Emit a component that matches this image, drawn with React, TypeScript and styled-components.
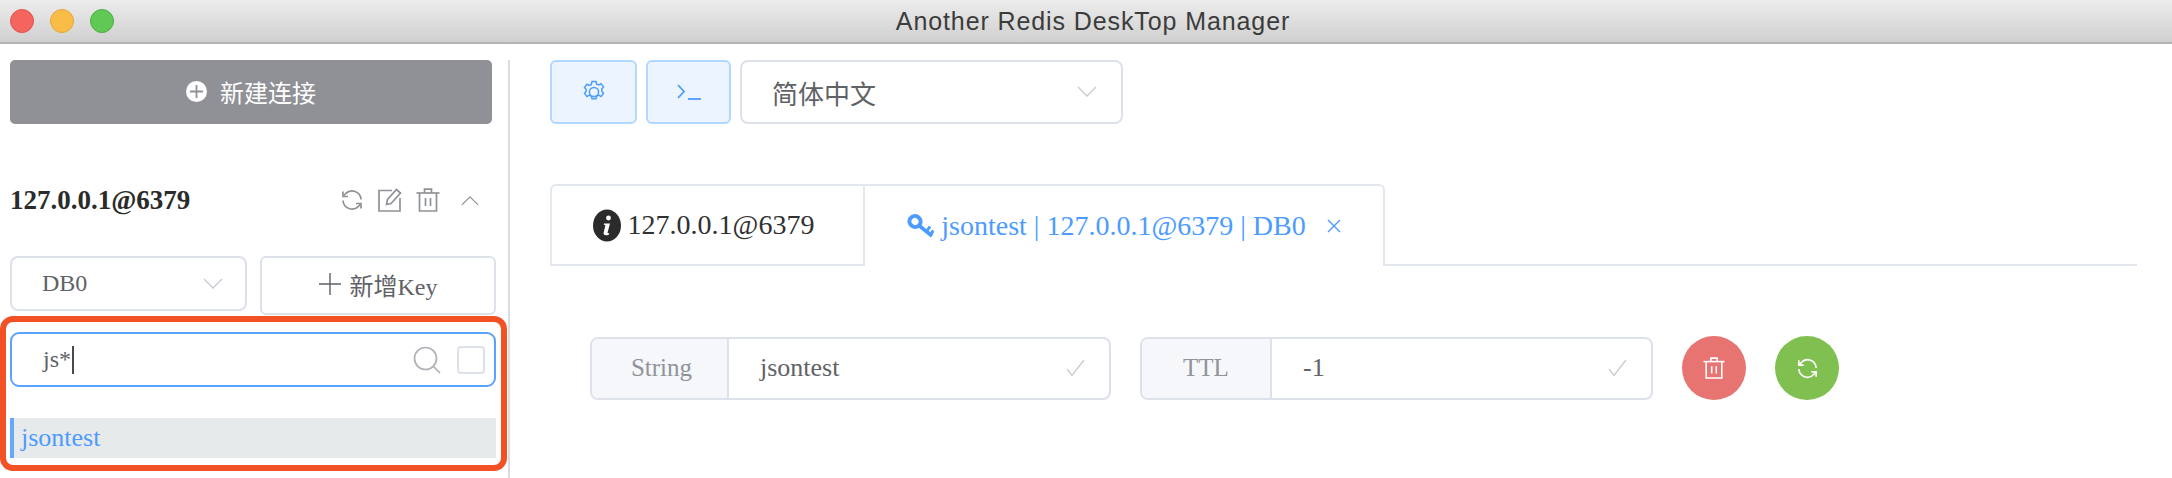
import styled, { createGlobalStyle } from "styled-components";

const SERIF = `"Liberation Serif", "Noto Sans CJK SC", serif`;

const GlobalStyle = createGlobalStyle`
  html, body {
    margin: 0;
    padding: 0;
    background: #fff;
    overflow: hidden;
  }
  * {
    box-sizing: border-box;
  }
`;

const RefreshIcon = ({ size = 24 }: { size?: number }) => (
  <svg width={size} height={size} viewBox="0 0 24 24" fill="none" stroke="currentColor" strokeWidth="1.7">
    <path d="M21 11.5a9 9 0 0 0-15.5-5.8L3.5 8" />
    <path d="M3 12.5a9 9 0 0 0 15.5 5.8L20.5 16" />
    <path d="M3 3.5V8.5H8" />
    <path d="M21 20.5V15.5H16" />
  </svg>
);

const TrashIcon = ({ size = 24 }: { size?: number }) => (
  <svg width={size} height={size} viewBox="0 0 24 24" fill="none" stroke="currentColor" strokeWidth="1.7">
    <path d="M0.5 5H23.5" />
    <path d="M8.5 5V1.2H15.5V5" />
    <path d="M3.5 5V23H20.5V5" />
    <path d="M9.5 10V18M14.5 10V18" />
  </svg>
);

const EditIcon = () => (
  <svg width="24" height="24" viewBox="0 0 24 24" fill="none" stroke="currentColor" strokeWidth="1.7">
    <path d="M14 2.5H1V23H22V10" />
    <path d="M8.5 16.5L9.5 11.5L18.5 1.5L22.5 5L13 15.5Z" />
  </svg>
);

const Chevron = ({ up, size = 20 }: { up?: boolean; size?: number }) => (
  <svg width={size} height={size * 0.6} viewBox="0 0 20 12" fill="none" stroke="currentColor" strokeWidth="1.3">
    <path d={up ? "M1 11L10 2L19 11" : "M1 1L10 10L19 1"} />
  </svg>
);

const CheckIcon = () => (
  <svg width="19" height="18" viewBox="0 0 19 18" fill="none" stroke="currentColor" strokeWidth="1.3">
    <path d="M1 10L6 16.5L18 1" />
  </svg>
);

const KeyIcon = () => (
  <svg width="27" height="24" viewBox="0 0 27 24" fill="none" stroke="currentColor">
    <ellipse cx="8" cy="7.5" rx="5.6" ry="5.4" strokeWidth="4" transform="rotate(35 8 7.5)" />
    <path d="M12 11.5L25 22" strokeWidth="3.6" />
    <path d="M19.5 17.5L23 12.5M23.5 20.5L26.5 16.5" strokeWidth="3" />
  </svg>
);

const Page = styled.div`
  width: 2172px;
  height: 478px;
  display: flex;
  flex-direction: column;
  font-family: ${SERIF};
  background: #fff;
  overflow: hidden;
`;

const TitleBar = styled.header`
  height: 44px;
  flex: none;
  display: flex;
  align-items: center;
  position: relative;
  padding-left: 10px;
  gap: 16px;
  background: linear-gradient(#ececec, #d0d0d0);
  border-bottom: 2px solid #b3b3b3;
`;

const Light = styled.span<{ $fill: string; $edge: string }>`
  width: 24px;
  height: 24px;
  border-radius: 50%;
  background: ${(p) => p.$fill};
  border: 1px solid ${(p) => p.$edge};
`;

const WindowTitle = styled.div`
  flex: 1;
  text-align: center;
  margin-left: -116px;
  font-family: "Liberation Sans", sans-serif;
  font-size: 25px;
  letter-spacing: 0.9px;
  color: #3c3c3c;
`;

const Body = styled.div`
  flex: 1;
  display: flex;
  padding-top: 16px;
  min-height: 0;
`;

const Sidebar = styled.aside`
  width: 510px;
  flex: none;
  padding: 0 12px 0 10px;
  border-right: 2px solid #dcdcdc;
`;

const ConnectButton = styled.button`
  width: 482px;
  height: 64px;
  display: flex;
  align-items: center;
  justify-content: center;
  gap: 13px;
  padding: 0 0 2px;
  border: none;
  border-radius: 5px;
  background: #8f9196;
  color: #fff;
  font-family: ${SERIF};
  font-size: 24px;
`;

const PlusDisc = styled.span`
  width: 21px;
  height: 21px;
  border-radius: 50%;
  background: #fff;
  color: #8f9196;
  display: flex;
  align-items: center;
  justify-content: center;
`;

const ServerRow = styled.div`
  margin-top: 52px;
  height: 48px;
  display: flex;
  align-items: center;
  justify-content: space-between;
  padding-right: 14px;
`;

const ServerName = styled.strong`
  font-size: 27px;
  color: #2b2b2b;
`;

const ServerTools = styled.div`
  display: flex;
  align-items: center;
  gap: 14px;
  color: #8f9297;
`;

const ToolSlot = styled.span`
  width: 24px;
  height: 24px;
  display: flex;
  align-items: center;
  justify-content: center;

  &:last-child {
    margin-left: 4px;
  }
`;

const FilterRow = styled.div`
  margin-top: 32px;
  display: flex;
  align-items: flex-start;
  gap: 13px;
`;

const Select = styled.div<{ $width: number; $height: number; $size: number; $pad: number }>`
  width: ${(p) => p.$width}px;
  height: ${(p) => p.$height}px;
  display: flex;
  align-items: center;
  justify-content: space-between;
  padding: 0 ${(p) => p.$pad}px 0 30px;
  border: 2px solid #dde1ea;
  border-radius: 8px;
  background: #fff;
  color: #606266;
  font-size: ${(p) => p.$size}px;
  flex: none;

  svg {
    color: #c6cad1;
  }
`;

const AddKeyButton = styled.button`
  width: 236px;
  height: 59px;
  display: flex;
  align-items: center;
  justify-content: center;
  gap: 9px;
  padding: 0 0 3px;
  border: 2px solid #dde1ea;
  border-radius: 6px;
  background: #fff;
  color: #606266;
  font-family: ${SERIF};
  font-size: 24px;
`;

const SearchSection = styled.section`
  position: relative;
  padding-top: 17px;
`;

const Annotation = styled.div`
  position: absolute;
  left: -10px;
  right: -11px;
  top: 1px;
  height: 155px;
  border: 6px solid #f25125;
  border-radius: 13px;
  pointer-events: none;
`;

const SearchBox = styled.div`
  height: 55px;
  display: flex;
  align-items: center;
  padding: 0 9px 0 31px;
  border: 2px solid #5aa2ff;
  border-radius: 9px;
  color: #606266;
  font-size: 24px;
`;

const Caret = styled.span`
  width: 2px;
  height: 28px;
  margin-left: 1px;
  background: #4a4a4a;
`;

const SearchGlass = styled.span`
  margin-left: auto;
  margin-right: 16px;
  display: flex;
  color: #aeb1b6;
`;

const Checkbox = styled.span`
  width: 28px;
  height: 28px;
  border: 2px solid #dde1ea;
  border-radius: 4px;
`;

const KeyItem = styled.div`
  margin-top: 31px;
  height: 40px;
  display: flex;
  align-items: center;
  padding-left: 7px;
  border-left: 4px solid #66a8ff;
  background: #e7eaeb;
  color: #4c9bff;
  font-size: 26px;
`;

const Main = styled.main`
  flex: 1;
  padding-left: 40px;
`;

const TopBar = styled.div`
  display: flex;
  gap: 9px;
`;

const IconButton = styled.button<{ $width: number }>`
  width: ${(p) => p.$width}px;
  height: 64px;
  display: flex;
  align-items: center;
  justify-content: center;
  padding: 0;
  border: 2px solid #b3d8ff;
  border-radius: 6px;
  background: #ecf5ff;
  color: #4c9bff;
`;

const Tabs = styled.div`
  margin-top: 60px;
  width: 1587px;
  height: 82px;
  display: flex;
`;

const Tab = styled.div<{ $active?: boolean }>`
  height: 82px;
  width: ${(p) => (p.$active ? 520 : 315)}px;
  display: flex;
  align-items: center;
  justify-content: center;
  gap: 7px;
  padding-right: ${(p) => (p.$active ? 0 : 8)}px;
  font-size: 28px;
  color: ${(p) => (p.$active ? "#4c9bff" : "#303133")};
  border: 2px solid #e3e7ee;
  border-left-width: ${(p) => (p.$active ? 0 : 2)}px;
  border-bottom-width: ${(p) => (p.$active ? 0 : 2)}px;
  border-radius: ${(p) => (p.$active ? "0 6px 0 0" : "6px 0 0 0")};
`;

const TabFill = styled.div`
  flex: 1;
  border-bottom: 2px solid #e3e7ee;
`;

const TabClose = styled.span`
  margin-left: 14px;
  display: flex;
`;

const FieldRow = styled.div`
  margin-top: 70px;
  margin-left: 40px;
  display: flex;
  align-items: center;
  gap: 29px;
`;

const Field = styled.div<{ $width: number }>`
  width: ${(p) => p.$width}px;
  height: 63px;
  display: flex;
  align-items: stretch;
  border: 2px solid #dde1ea;
  border-radius: 8px;
  flex: none;
`;

const FieldLabel = styled.div<{ $width: number; $nudge?: number }>`
  width: ${(p) => p.$width}px;
  flex: none;
  display: flex;
  align-items: center;
  justify-content: center;
  padding-left: ${(p) => p.$nudge ?? 0}px;
  background: #f5f7fa;
  border-right: 2px solid #dde1ea;
  border-radius: 6px 0 0 6px;
  color: #909399;
  font-size: 25px;
`;

const FieldValue = styled.div`
  flex: 1;
  display: flex;
  align-items: center;
  justify-content: space-between;
  padding: 0 24px 0 31px;
  color: #606266;
  font-size: 26px;

  svg {
    color: #c6cad1;
  }
`;

const RoundButton = styled.button<{ $bg: string }>`
  width: 64px;
  height: 64px;
  flex: none;
  display: flex;
  align-items: center;
  justify-content: center;
  padding: 0;
  border: none;
  border-radius: 50%;
  background: ${(p) => p.$bg};
  color: #fff;
`;

const App = () => (
  <Page>
    <GlobalStyle />
    <TitleBar>
      <Light $fill="#f4655d" $edge="#e2524a" />
      <Light $fill="#f9bd47" $edge="#e5a53a" />
      <Light $fill="#60c854" $edge="#50ad46" />
      <WindowTitle>Another Redis DeskTop Manager</WindowTitle>
    </TitleBar>
    <Body>
      <Sidebar>
        <ConnectButton>
          <PlusDisc>
            <svg width="13" height="13" viewBox="0 0 13 13" stroke="currentColor" strokeWidth="1.8">
              <path d="M6.5 0V13M0 6.5H13" />
            </svg>
          </PlusDisc>
          新建连接
        </ConnectButton>
        <ServerRow>
          <ServerName>127.0.0.1@6379</ServerName>
          <ServerTools>
            <ToolSlot>
              <RefreshIcon />
            </ToolSlot>
            <ToolSlot>
              <EditIcon />
            </ToolSlot>
            <ToolSlot>
              <TrashIcon />
            </ToolSlot>
            <ToolSlot>
              <Chevron up size={18} />
            </ToolSlot>
          </ServerTools>
        </ServerRow>
        <FilterRow>
          <Select $width={237} $height={55} $size={24} $pad={22}>
            DB0
            <Chevron />
          </Select>
          <AddKeyButton>
            <svg width="22" height="22" viewBox="0 0 22 22" stroke="currentColor" strokeWidth="1.4">
              <path d="M11 0V22M0 11H22" />
            </svg>
            新增Key
          </AddKeyButton>
        </FilterRow>
        <SearchSection>
          <SearchBox>
            js*
            <Caret />
            <SearchGlass>
              <svg width="28" height="28" viewBox="0 0 28 28" fill="none" stroke="currentColor" strokeWidth="1.7">
                <circle cx="12.5" cy="12.5" r="11" />
                <path d="M20.5 20.5L27 27" />
              </svg>
            </SearchGlass>
            <Checkbox />
          </SearchBox>
          <KeyItem>jsontest</KeyItem>
          <Annotation />
        </SearchSection>
      </Sidebar>
      <Main>
        <TopBar>
          <IconButton $width={87}>
            <svg width="24" height="24" viewBox="0 0 24 24" fill="none" stroke="currentColor" strokeWidth="1.5">
              <path d="M10 1.5h4l.7 2.6 2 .9 2.4-1.3 2.4 3.2-1.7 2.1v2.2l1.7 2.1-2.4 3.3-2.4-1.4-2 1-.7 2.6h-4l-.7-2.6-2-1-2.4 1.4-2.4-3.3 1.7-2.1V9.5L2.5 7.4l2.4-3.2L7.3 5.5l2-.9z" />
              <circle cx="12" cy="12" r="4.6" />
            </svg>
          </IconButton>
          <IconButton $width={85}>
            <svg width="24" height="18" viewBox="0 0 24 18" fill="none" stroke="currentColor" strokeWidth="1.8">
              <path d="M1 2L7 8.5L1 15" />
              <path d="M11 16H24" />
            </svg>
          </IconButton>
          <Select $width={383} $height={64} $size={26} $pad={24}>
            简体中文
            <Chevron />
          </Select>
        </TopBar>
        <Tabs>
          <Tab>
            <svg width="28" height="33" viewBox="0 0 28 33">
              <ellipse cx="14" cy="16.5" rx="14" ry="16" fill="#2b2b2b" />
              <circle cx="15.5" cy="9" r="2.4" fill="#fff" />
              <path d="M11 14.5h6l-2.4 9c-.2.9.4 1 1.8.4l-.4 1.5c-3 1.5-6 1-5.4-1.6l1.7-7c.2-.9-.4-1-1.6-1z" fill="#fff" />
            </svg>
            127.0.0.1@6379
          </Tab>
          <Tab $active>
            <KeyIcon />
            jsontest | 127.0.0.1@6379 | DB0
            <TabClose>
              <svg width="14" height="14" viewBox="0 0 14 14" stroke="currentColor" strokeWidth="1.4">
                <path d="M1 1L13 13M13 1L1 13" />
              </svg>
            </TabClose>
          </Tab>
          <TabFill />
        </Tabs>
        <FieldRow>
          <Field $width={521}>
            <FieldLabel $width={137} $nudge={4}>
              String
            </FieldLabel>
            <FieldValue>
              jsontest
              <CheckIcon />
            </FieldValue>
          </Field>
          <Field $width={513}>
            <FieldLabel $width={130}>TTL</FieldLabel>
            <FieldValue>
              -1
              <CheckIcon />
            </FieldValue>
          </Field>
          <RoundButton $bg="#e87471">
            <TrashIcon size={22} />
          </RoundButton>
          <RoundButton $bg="#80c050">
            <RefreshIcon size={23} />
          </RoundButton>
        </FieldRow>
      </Main>
    </Body>
  </Page>
);

export default App;
